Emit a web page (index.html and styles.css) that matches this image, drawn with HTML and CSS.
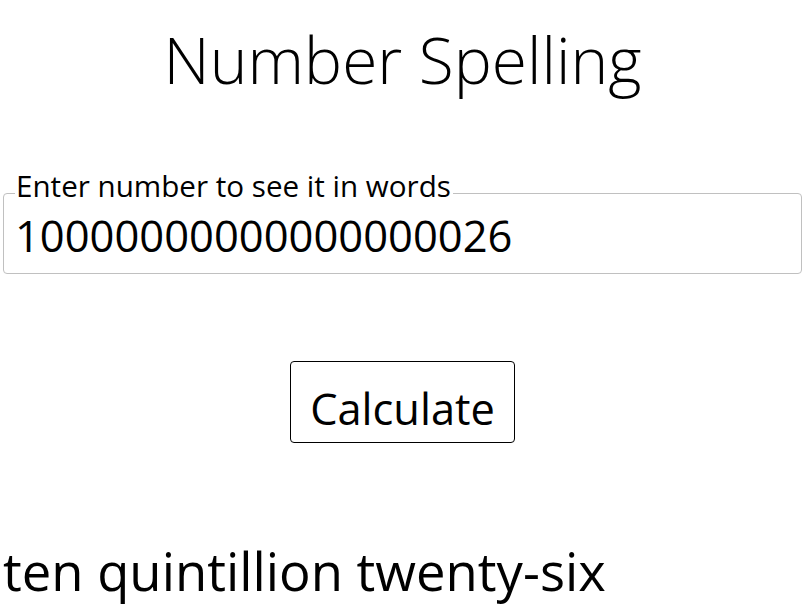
FILE: index.html
```html
<!DOCTYPE html>
<html lang="en">
<head>
<meta charset="utf-8">
<title>Number Spelling</title>
<link rel="stylesheet" href="styles.css">
</head>
<body>
<main class="page">
  <h1 class="title">Number Spelling</h1>
  <fieldset class="field">
    <legend class="field-label">Enter number to see it in words</legend>
    <input class="field-input" type="text" value="10000000000000000026">
  </fieldset>
  <div class="actions">
    <button class="calc-btn" type="button">Calculate</button>
  </div>
  <p class="result">ten quintillion twenty-six</p>
</main>
</body>
</html>
```

FILE: styles.css
```css
html, body {
  margin: 0;
  padding: 0;
  background: #ffffff;
}

body {
  font-family: "Open Sans", "Noto Sans", sans-serif;
  color: #000000;
  overflow: hidden;
}

.page {
  padding: 0 0 0 3px;
}

.title {
  margin: 20px 0 0;
  height: 80px;
  font-size: 64px;
  line-height: 80px;
  font-weight: 300;
  text-align: center;
}

.field {
  margin: 70px 0 0;
  padding: 0 11px 19px;
  border: 1px solid #c0c0c0;
  border-radius: 4px;
  min-inline-size: 0;
}

.field-label {
  padding: 0 2px 14px 1px;
  font-size: 29.6px;
  line-height: 32px;
}

.field-input {
  display: block;
  width: 100%;
  box-sizing: border-box;
  height: 38px;
  margin: 0;
  padding: 0;
  border: none;
  outline: none;
  background: transparent;
  font-family: "Open Sans", "Noto Sans", sans-serif;
  font-size: 43.5px;
  line-height: 38px;
  color: #000000;
}

.actions {
  display: flex;
  justify-content: center;
  margin-top: 87px;
}

.calc-btn {
  box-sizing: border-box;
  width: 225px;
  height: 82px;
  padding: 14px 0 0;
  background: #ffffff;
  border: 1px solid #000000;
  border-radius: 4px;
  font-family: "Open Sans", "Noto Sans", sans-serif;
  font-size: 43.4px;
  line-height: 50px;
  color: #000000;
}

.result {
  margin: 93px 0 0;
  font-size: 52.6px;
  line-height: 70px;
  white-space: nowrap;
}
```
